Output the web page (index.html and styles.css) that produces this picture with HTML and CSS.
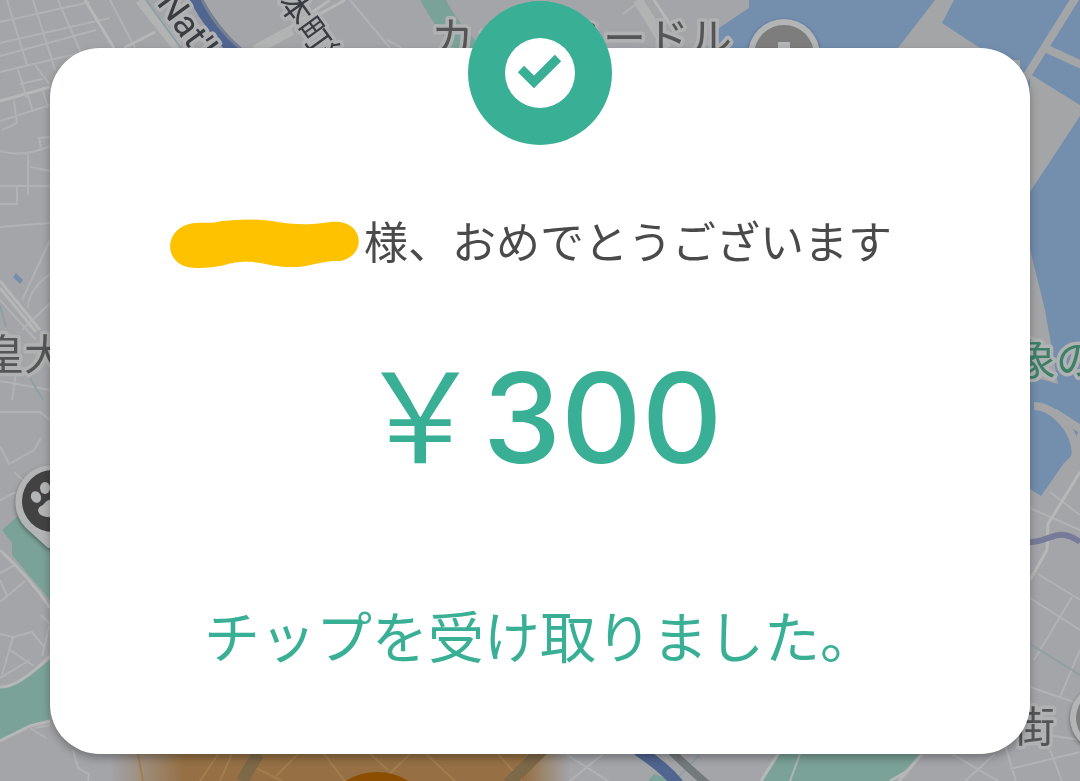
FILE: index.html
```
<!DOCTYPE html>
<html lang="ja">
<head>
    <meta charset="UTF-8">
    <title>チップを受け取りました</title>
    <meta name="viewport" content="width=device-width, initial-scale=1.0">
    <link rel="stylesheet" href="styles.css">
</head>
<body>
    <!-- Dimmed map behind the dialog -->
    <svg class="map" viewBox="0 0 1080 781" preserveAspectRatio="xMidYMin slice" aria-hidden="true">
        <defs>
            <linearGradient id="heat">
                <stop offset="0" stop-color="#967044" stop-opacity="0"/>
                <stop offset="0.16" stop-color="#967044"/>
                <stop offset="0.9" stop-color="#967044"/>
                <stop offset="1" stop-color="#967044" stop-opacity="0"/>
            </linearGradient>
        </defs>

        <!-- Water -->
        <g class="water">
            <path d="M719 28L749 8V0H1080V427L1073 445L1071 457L1064 463L1041 496L1030 489L1020 60H700Z"/>
            <path d="M13 277L16 273L23 280L20 284Z"/>
        </g>
        <g class="land">
            <path d="M935 0H954L942 23L980 48H898Z"/>
            <path d="M1030 74L1080 105V116L1030 192Z"/>
            <path d="M1030 249L1045 310L1058 384L1030 376Z"/>
        </g>
        <g class="pier">
            <path d="M1078 -6L1023 82M1045 48L1084 66"/>
            <path d="M1034 406C1052 406 1076 428 1076 456L1068 466M1054 412L1082 430"/>
        </g>

        <!-- Parks -->
        <g class="park">
            <path d="M420 0H446Q458 24 485 50H454Q437 30 420 0Z"/>
            <path d="M2 530L18 516L50 530V600L12 555V543Z"/>
            <path d="M0 688Q12 690 50 660V720L28 726L0 741Z"/>
            <path d="M780 754H920L895 781H763Z"/>
            <path d="M648 781L654 774L674 781Z"/>
        </g>

        <!-- Small streets -->
        <g class="street">
            <path d="M7 0L27 65M33 0L55 70M58 0L82 55M0 22L90 2M0 43L110 18M0 56L96 30M0 72L80 53M18 70L27 98M35 65L50 85M20 84L42 79M0 121L50 105M14 101L17 123L2 130M28 95L33 112M43 91L48 108M110 0L135 48M82 54L98 50"/>
            <path d="M0 151Q24 158 50 146M28 155V195M30 167L50 171M0 186H50M17 187V204H0M0 227L50 223M50 240L22 300M50 274Q28 290 28 308M50 303L22 330M0 300L36 340M20 345L12 400M0 381L50 390M50 137L39 138L41 148"/>
            <path d="M0 412H40L50 420M0 446L9 464L34 450L41 438M0 500L14 493L50 490M14 472L28 485M0 573L15 565M0 602L25 581M7 596L0 580M0 634L13 637L2 675M13 637L32 632L45 648M10 650L34 666M41 615L50 624L42 656M0 678L30 660"/>
            <path d="M30 728L46 738M35 728L50 725M73 750L78 768L89 774L88 781M138 754L143 781M350 0L390 48M387 40L402 48"/>
            <path d="M566 754L608 781M603 754L570 781M790 781L800 754M952 754L998 781M995 754L965 781M1005 745L1016 781M1010 769L1080 752M1050 750L1062 781M1030 687L1080 704M1048 735L1080 740"/>
            <path d="M1038 574L1080 600M1030 598L1080 630M1072 597L1034 660M1080 650L1060 697M1030 508L1080 530M623 14L642 0M1050 492L1080 515"/>
        </g>
        <g class="road">
            <path d="M85 0L114 48M0 101L50 87M124 48L155 32M318 15L345 0M0 281L40 330M0 288L36 332M0 550Q32 580 50 608M0 687Q18 688 50 656M0 741L30 726L50 721M260 48L330 0M640 0L660 28M654 0L671 26M1080 472L1048 524L1047 550L1030 580M778 754L761 781M922 754L899 781M906 772L890 781"/>
        </g>
        <path class="road wide" d="M140 0L178 48M292 30L255 50M638 0L667 48"/>
        <path class="creek" d="M146 0L181 48M0 305L6 327M30 378L43 400M1030 644L1080 675M700 754L675 781"/>

        <!-- Rail and rivers -->
        <path class="rail" d="M194 -4Q211 28 237 54"/>
        <path class="rail-edge" d="M202 0Q216 28 242 50"/>
        <path class="rail" d="M638 750Q664 767 678 784"/>
        <path class="canal" d="M670 750Q686 766 707 784"/>
        <path class="line" d="M1030 542C1048 543 1058 525 1080 542"/>

        <!-- Demand area -->
        <rect x="110" y="740" width="460" height="41" fill="url(#heat)"/>
        <path class="heat-street" d="M218 754L200 781M232 754L220 781M248 764L282 781M324 754L345 781M370 754L388 770M382 781L410 754M426 754L455 781M298 754L276 776M498 754L522 781M138 754L143 781"/>
        <path class="heat-river" d="M258 754L242 781M542 750L508 784"/>
        <ellipse class="heat-core" cx="377" cy="801" rx="43" ry="29"/>

        <!-- Pins -->
        <g class="pin">
            <circle cx="784" cy="55" r="36"/>
            <path d="M26 528C4 506 18 465 53 465V548H48Z"/>
            <circle cx="1103" cy="718" r="33"/>
        </g>
        <circle class="pin-grey" cx="784" cy="55" r="30"/>
        <path class="pin-mark" d="M778 42H790V60H778Z"/>
        <circle class="pin-dark" cx="53" cy="501" r="31"/>
        <g class="pin-mark">
            <ellipse cx="36" cy="497" rx="5" ry="6" transform="rotate(-25 36 497)"/>
            <ellipse cx="45" cy="488" rx="5" ry="6"/>
            <path d="M38 511Q38 507 43 505Q47 499 53 499V517Q40 518 38 511Z"/>
        </g>
        <circle class="pin-grey" cx="1103" cy="718" r="27"/>

        <!-- Place names -->
        <g class="label">
            <text x="431" y="54" font-size="43">カップヌードル</text>
            <text x="-18" y="370" font-size="42">皇大</text>
            <text class="label-park" x="1014" y="375" font-size="42">象の</text>
            <text x="1013" y="742" font-size="42">街</text>
            <text class="label-rail" font-size="36" transform="translate(156 3) rotate(54)">Nat'l</text>
            <text class="label-rail" font-size="32" transform="translate(277 2) rotate(54)">本町線</text>
        </g>
    </svg>

    <main class="dialog">
        <div class="badge">
            <svg class="badge-icon" viewBox="0 0 70 70" aria-hidden="true">
                <circle cx="35" cy="35" r="35" fill="#fff"/>
                <path d="M16 31L29 44L53 20" fill="none" stroke="#39b095" stroke-width="9"/>
            </svg>
        </div>

        <p class="greeting">
            <svg class="name-mask" viewBox="0 0 190 50" role="img" aria-label="名前は非表示">
                <path d="M24 4C36 3 40 5 52 2Q80 -1 102 2Q124 6 142 5C158 4 160 2 170 3C194 6 196 37 170 42C150 41 140 49 118 48C96 47 92 42 70 43C56 44 54 49 25 49C-8 48 -8 8 24 4Z"/>
            </svg>
            <span>様、おめでとうございます</span>
        </p>

        <p class="amount"><span class="yen">￥</span>300</p>

        <p class="message">チップを受け取りました。</p>
    </main>
</body>
</html>
```

FILE: styles.css
```
/* Base styles */
* {
    box-sizing: border-box;
    margin: 0;
    padding: 0;
}

body {
    font-family: 'Noto Sans CJK JP', 'Noto Sans', sans-serif;
    background-color: #a4a5a9;
    color: #4a4a4a;
    min-height: 100vh;
    padding: 48px 50px 27px;
    overflow: hidden;
}

/* Map */
.map {
    position: fixed;
    top: 0;
    left: 0;
    width: 100%;
    height: 100%;
    z-index: -1;
}

.water {
    fill: #748eae;
}

.land {
    fill: #a4a5a7;
}

.park {
    fill: #7ba298;
}

.pier,
.street,
.road,
.creek,
.rail,
.rail-edge,
.canal,
.line,
.heat-street,
.heat-river {
    fill: none;
}

.pier {
    stroke: #a4a5a7;
    stroke-width: 8;
}

.street {
    stroke: #b1b2b4;
    stroke-width: 2;
}

.road {
    stroke: #b6b8b8;
    stroke-width: 3;
}

.wide {
    stroke: #b1b4b3;
    stroke-width: 10;
}

.creek {
    stroke: #8fa0a4;
    stroke-width: 2;
}

.rail {
    stroke: #50658f;
    stroke-width: 12;
}

.rail-edge {
    stroke: #777f94;
    stroke-width: 3;
}

.canal {
    stroke: #74797b;
    stroke-width: 8;
}

.line {
    stroke: #777b99;
    stroke-width: 6;
}

.heat-street {
    stroke: #a37d4e;
    stroke-width: 2;
}

.heat-river {
    stroke: #7d6848;
    stroke-width: 12;
}

.heat-core {
    fill: #8c4e00;
}

.pin {
    fill: #b3b4b5;
    filter: drop-shadow(0 2px 2px rgba(0, 0, 0, 0.4));
}

.pin-grey {
    fill: #7d7d7d;
}

.pin-dark {
    fill: #424242;
}

.pin-mark {
    fill: #b3b4b5;
}

.label {
    fill: #555;
    stroke: #b0b1b2;
    stroke-width: 7px;
    stroke-linejoin: round;
    paint-order: stroke;
}

.label-park {
    fill: #3c8068;
}

.label-rail {
    fill: #393d42;
    font-family: Roboto, 'Noto Sans CJK JP', sans-serif;
}

/* Dialog */
.dialog {
    position: relative;
    display: flex;
    flex-direction: column;
    align-items: center;
    padding: 158px 20px 78px;
    border-radius: 50px;
    background-color: #fff;
    box-shadow: 0 4px 8px rgba(0, 0, 0, 0.3);
    white-space: nowrap;
}

.badge {
    position: absolute;
    top: -47px;
    left: 50%;
    display: flex;
    align-items: center;
    justify-content: center;
    width: 144px;
    height: 144px;
    border-radius: 50%;
    background-color: #39b095;
    transform: translateX(-50%);
}

.badge-icon {
    width: 70px;
    height: 70px;
}

.greeting {
    display: flex;
    align-items: center;
    gap: 4px;
    margin-right: 18px;
    font-size: 44px;
    line-height: 68px;
}

.name-mask {
    width: 190px;
    height: 50px;
    margin-top: 8px;
    fill: #fec200;
}

.amount {
    margin-top: 55px;
    color: #39b095;
    font-family: Inter, 'Noto Sans CJK JP', sans-serif;
    font-size: 125px;
    font-weight: 500;
    line-height: 160px;
}

.yen {
    font-family: 'Noto Sans CJK JP', sans-serif;
    font-weight: 400;
}

.message {
    margin-top: 94px;
    color: #39b095;
    font-size: 56px;
    line-height: 84px;
}
```
